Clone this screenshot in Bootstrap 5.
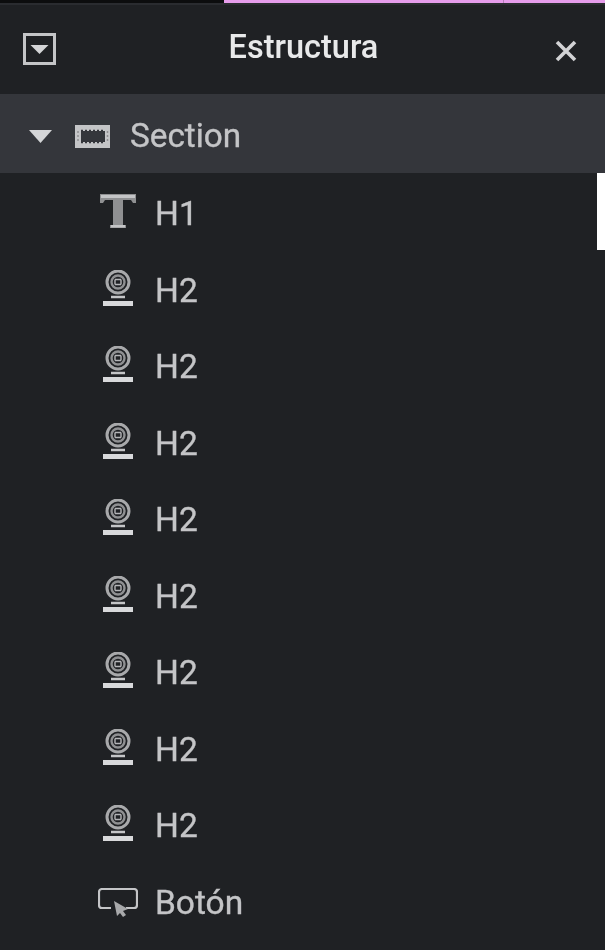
<!DOCTYPE html>
<html lang="es">
<head>
<meta charset="utf-8">
<title>Estructura</title>
<link href="https://cdn.jsdelivr.net/npm/bootstrap@5.3.0/dist/css/bootstrap.min.css" rel="stylesheet">
<style>
html,body{height:100%}
body{background:#1f2124;font-family:Roboto,"Liberation Sans",sans-serif;overflow:hidden}
.topstrip{height:3px;background:#0c0d0e}
.topblack{width:224px}
.toppink{background:#e69ceb}
.topdiv{width:1px;background:#b57fb9}
.toptail{width:101px}
.topedge{height:2px;background:#2a2c30}
.hdr{height:89px;padding:0 28px 0 23px}
.hdrtitle{font-size:32.5px;font-weight:500;color:#e8e9ea;line-height:1;position:absolute;left:0;right:0;text-align:center;padding-left:2px;padding-bottom:4px}
.hdrclose{margin-top:3px}
.sectionrow{height:79px;background:#34363b;color:#c4c5c7;font-size:33.3px;padding-left:29px;padding-top:5px}
.secicon{margin-left:23px;margin-right:20px}
.itemrow{height:76.5px;padding-left:98px;color:#c4c5c7;font-size:33.5px;position:relative}
.itemicon{width:40px;margin-right:17px;flex:none}
.itemtext{padding-top:6px}
.btnicon{margin-top:6px}
.activebar{position:absolute;right:0;top:0;bottom:0;width:8px;background:#fff}
.sectionrow span,.itemtext{-webkit-text-stroke:.35px currentColor}
svg,.hdrtitle,.sectionrow span,.itemtext{filter:blur(.45px)}
</style>
</head>
<body>
<div class="topstrip d-flex"><div class="topblack"></div><div class="toppink flex-grow-1"></div><div class="topdiv"></div><div class="toppink toptail"></div></div>
<div class="topedge"></div>
<div class="hdr d-flex align-items-center justify-content-between position-relative">
  <svg width="33" height="33" viewBox="0 0 33 33"><rect x="1.5" y="1.5" width="30" height="29" fill="none" stroke="#c4c5c7" stroke-width="3"/><path d="M7.5 12h18l-9 9z" fill="#d4d5d7"/></svg>
  <div class="hdrtitle">Estructura</div>
  <svg class="hdrclose" width="22" height="22" viewBox="0 0 22 22"><path d="M2 2l18 18M20 2L2 20" stroke="#d2d3d5" stroke-width="3.6" fill="none"/></svg>
</div>
<div class="sectionrow d-flex align-items-center">
  <svg width="23" height="13" viewBox="0 0 23 13"><path d="M0 0h23L11.5 13z" fill="#d4d5d7"/></svg>
  <svg class="secicon" width="35" height="23" viewBox="0 0 35 23"><rect width="35" height="23" fill="#c4c5c7"/><rect x="6" y="6" width="24" height="11" fill="#34363b"/><path d="M6 5.5h24M6 17.5h24" stroke="#34363b" stroke-width="1.4" stroke-dasharray="2 2"/><path d="M3 6v11M32.5 6v11" stroke="#8f9092" stroke-width="1.5" stroke-dasharray="2 2"/></svg>
  <span>Section</span>
</div>
<div class="itemrow d-flex align-items-center">
  <svg class="itemicon" height="36" viewBox="0 0 40 36"><path d="M2 1h36v9h-3l-2-3H25v25h3v3H12v-3h3V7H7l-2 3H2z" fill="#8f9092"/><path d="M3 2h34v3H3z" fill="#c4c5c7"/><path d="M13 32h14v2.5H13z" fill="#c4c5c7"/></svg>
  <span class="itemtext">H1</span>
  <div class="activebar"></div>
</div>
<div class="itemrow d-flex align-items-center"><svg class="itemicon" height="36" viewBox="0 0 40 36"><use href="#webcam"/></svg><span class="itemtext">H2</span></div>
<div class="itemrow d-flex align-items-center"><svg class="itemicon" height="36" viewBox="0 0 40 36"><use href="#webcam"/></svg><span class="itemtext">H2</span></div>
<div class="itemrow d-flex align-items-center"><svg class="itemicon" height="36" viewBox="0 0 40 36"><use href="#webcam"/></svg><span class="itemtext">H2</span></div>
<div class="itemrow d-flex align-items-center"><svg class="itemicon" height="36" viewBox="0 0 40 36"><use href="#webcam"/></svg><span class="itemtext">H2</span></div>
<div class="itemrow d-flex align-items-center"><svg class="itemicon" height="36" viewBox="0 0 40 36"><use href="#webcam"/></svg><span class="itemtext">H2</span></div>
<div class="itemrow d-flex align-items-center"><svg class="itemicon" height="36" viewBox="0 0 40 36"><use href="#webcam"/></svg><span class="itemtext">H2</span></div>
<div class="itemrow d-flex align-items-center"><svg class="itemicon" height="36" viewBox="0 0 40 36"><use href="#webcam"/></svg><span class="itemtext">H2</span></div>
<div class="itemrow d-flex align-items-center"><svg class="itemicon" height="36" viewBox="0 0 40 36"><use href="#webcam"/></svg><span class="itemtext">H2</span></div>
<div class="itemrow d-flex align-items-center">
  <svg class="itemicon btnicon" height="30" viewBox="0 0 40 30"><path d="M13 20H4a3 3 0 0 1-3-3V4a3 3 0 0 1 3-3h32a3 3 0 0 1 3 3v13a3 3 0 0 1-3 3H28" fill="none" stroke="#c4c5c7" stroke-width="2.2"/><path d="M16 13l14 8-5 2 3 4-3 2-3-4-3 3z" fill="#a8a9ab"/></svg>
  <span class="itemtext">Botón</span>
</div>
<svg width="0" height="0" class="position-absolute"><defs>
  <g id="webcam">
    <circle cx="20" cy="12" r="11" fill="none" stroke="#a8a9ab" stroke-width="3"/>
    <circle cx="20" cy="12" r="6.5" fill="none" stroke="#8f9092" stroke-width="2.4"/>
    <path d="M17 9.5h6M17 14.5h6M17 9.5v5M23 9.5v5" stroke="#b4b5b7" stroke-width="1.4"/>
    <path d="M13 27h14" stroke="#c4c5c7" stroke-width="2.5"/>
    <rect x="5" y="31" width="30" height="5" fill="#d8d9db"/>
  </g>
</defs></svg>
<script src="https://cdn.jsdelivr.net/npm/bootstrap@5.3.0/dist/js/bootstrap.bundle.min.js"></script>
</body>
</html>
